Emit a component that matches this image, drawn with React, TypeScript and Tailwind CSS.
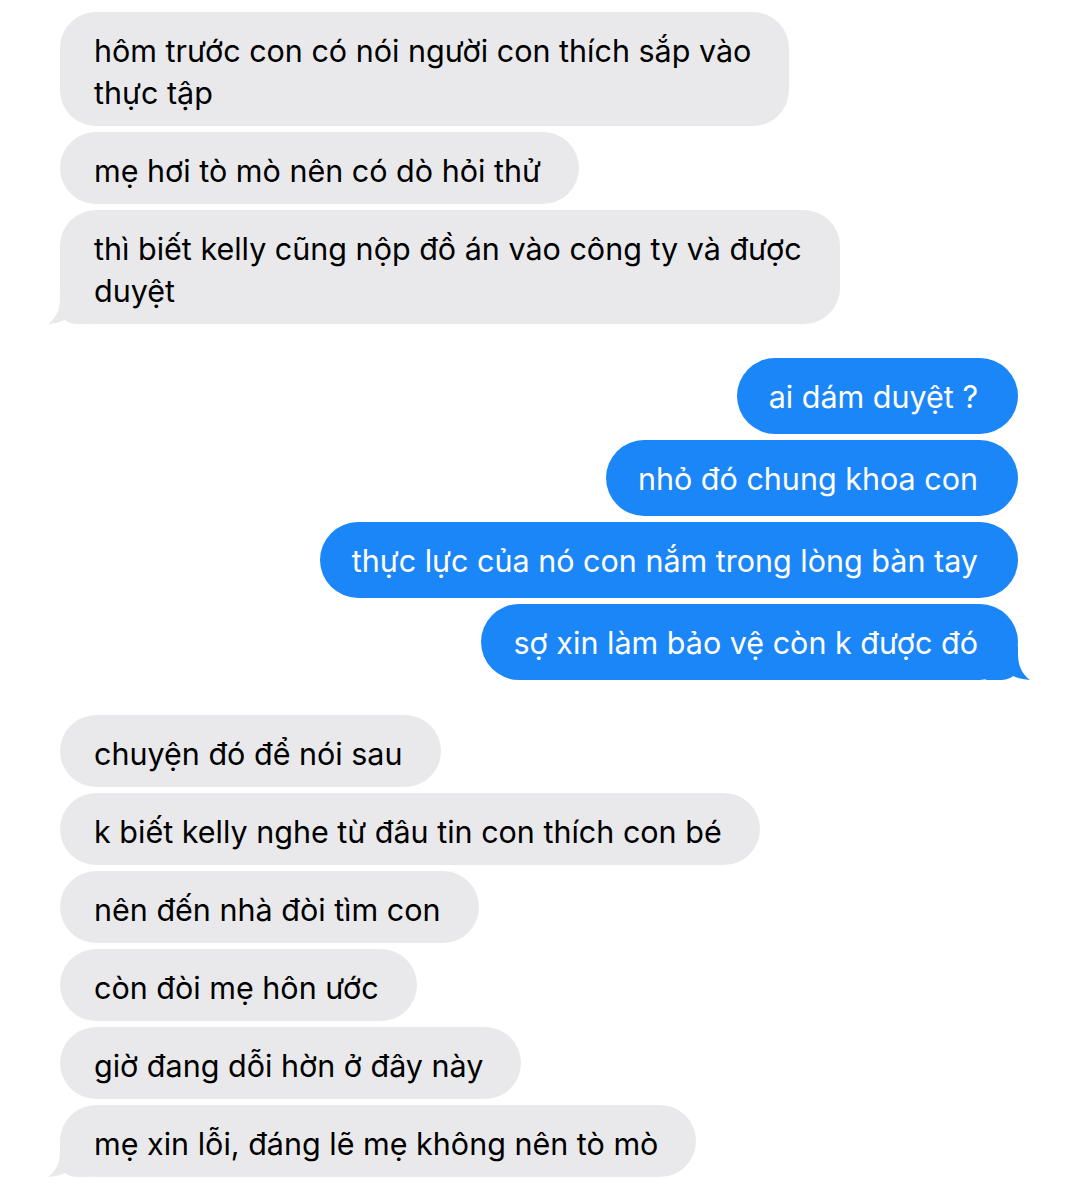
const FONT = { fontFamily: "Inter, 'Noto Sans', 'Liberation Sans', sans-serif" };

type Msg = { lines: string[]; tail?: boolean };

const topGroup: Msg[] = [
  { lines: ["hôm trước con có nói người con thích sắp vào", "thực tập"] },
  { lines: ["mẹ hơi tò mò nên có dò hỏi thử"] },
  { lines: ["thì biết kelly cũng nộp đồ án vào công ty và được", "duyệt"], tail: true },
];

const blueGroup: Msg[] = [
  { lines: ["ai dám duyệt ?"] },
  { lines: ["nhỏ đó chung khoa con"] },
  { lines: ["thực lực của nó con nắm trong lòng bàn tay"] },
  { lines: ["sợ xin làm bảo vệ còn k được đó"], tail: true },
];

const bottomGroup: Msg[] = [
  { lines: ["chuyện đó để nói sau"] },
  { lines: ["k biết kelly nghe từ đâu tin con thích con bé"] },
  { lines: ["nên đến nhà đòi tìm con"] },
  { lines: ["còn đòi mẹ hôn ước"] },
  { lines: ["giờ đang dỗi hờn ở đây này"] },
  { lines: ["mẹ xin lỗi, đáng lẽ mẹ không nên tò mò"], tail: true },
];

function GrayBubble({ msg }: { msg: Msg }) {
  return (
    <div className="relative self-start">
      <div className="relative z-10 rounded-[36px] bg-[#e9e9eb] pl-[34px] pr-[38px] pt-[18px] pb-[12px] text-[30.5px] leading-[42px] text-black whitespace-nowrap">
        {msg.lines.map((l, i) => (
          <div key={i}>{l}</div>
        ))}
      </div>
      {msg.tail && (
        <svg className="absolute z-0 left-[-12px] bottom-0" width="44" height="34" viewBox="0 0 44 34">
          <path d="M12 0 H44 V34 H28 C23 33.5 19 32 17 30 C12 32.5 6 33.6 0 34 C8 28 12 20 12 8 Z" fill="#e9e9eb" />
        </svg>
      )}
    </div>
  );
}

function BlueBubble({ msg }: { msg: Msg }) {
  return (
    <div className="relative self-end">
      <div className="relative z-10 rounded-[38px] bg-[#1b86f8] pl-[32px] pr-[40px] pt-[18px] pb-[16px] text-[30.5px] leading-[42px] text-white whitespace-nowrap">
        {msg.lines.map((l, i) => (
          <div key={i}>{l}</div>
        ))}
      </div>
      {msg.tail && (
        <svg className="absolute z-0 right-[-12px] bottom-0" width="44" height="34" viewBox="0 0 44 34">
          <path d="M32 0 H0 V34 H16 C21 33.5 25 32 27 30 C32 32.5 38 33.6 44 34 C36 28 32 20 32 8 Z" fill="#1b86f8" />
        </svg>
      )}
    </div>
  );
}

export default function App() {
  return (
    <div className="w-[1080px] h-[1202px] bg-white overflow-hidden" style={FONT}>
      <div className="flex flex-col pt-[12px] pl-[60px] pr-[62px]">
        <div className="flex flex-col gap-[6px]">
          {topGroup.map((m, i) => (
            <GrayBubble key={i} msg={m} />
          ))}
        </div>
        <div className="flex flex-col gap-[6px] mt-[34px]">
          {blueGroup.map((m, i) => (
            <BlueBubble key={i} msg={m} />
          ))}
        </div>
        <div className="flex flex-col gap-[6px] mt-[35px]">
          {bottomGroup.map((m, i) => (
            <GrayBubble key={i} msg={m} />
          ))}
        </div>
      </div>
    </div>
  );
}
